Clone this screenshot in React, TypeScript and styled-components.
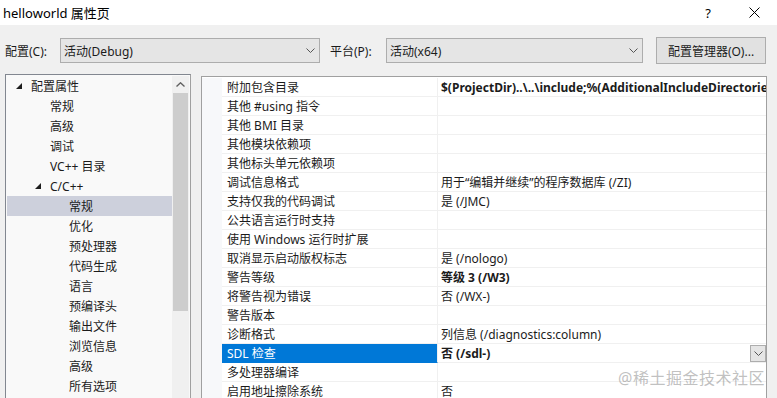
import styled, { createGlobalStyle } from 'styled-components'

const GlobalStyle = createGlobalStyle`
    html, body {
        margin: 0;
        padding: 0;
        background: #f0f0f0;
    }
    body {
        font-family: "Noto Sans", "Noto Sans CJK SC", sans-serif;
        font-size: 12px;
        color: #1b1b1b;
    }
`

const Window = styled.div`
    position: relative;
    width: 777px;
    height: 398px;
    overflow: hidden;
    background: #f0f0f0;
    display: flex;
    flex-direction: column;
`

const TitleBar = styled.div`
    height: 25px;
    flex-shrink: 0;
    background: #ffffff;
    display: flex;
    align-items: center;
    padding-left: 3px;
    font-size: 13px;
    color: #000;
`

const TitleText = styled.span`
    flex: 1;
`

const TitleButton = styled.span`
    width: 46px;
    display: flex;
    justify-content: center;
    align-items: center;
    font-size: 13px;
`

const Toolbar = styled.div`
    display: flex;
    align-items: center;
    padding: 12px 0 0 5px;
    height: 27px;
    flex-shrink: 0;
`

const Label = styled.span<{ $width: number; $gap?: number }>`
    width: ${p => p.$width}px;
    margin-left: ${p => p.$gap ?? 0}px;
    flex-shrink: 0;
`

const Combo = styled.div<{ $width: number }>`
    width: ${p => p.$width}px;
    height: 25px;
    box-sizing: border-box;
    border: 1px solid #adadad;
    background: #e5e5e5;
    display: flex;
    align-items: center;
    justify-content: space-between;
    padding: 0 4px 0 3px;
    flex-shrink: 0;
`

const Button = styled.div`
    margin-left: 13px;
    width: 110px;
    height: 27px;
    box-sizing: border-box;
    border: 1px solid #adadad;
    background: #e1e1e1;
    display: flex;
    align-items: center;
    justify-content: center;
`

const Main = styled.div`
    display: flex;
    align-items: flex-start;
    padding: 10px 0 0 5px;
    gap: 10px;
    flex: 1;
    min-height: 0;
`

const TreePanel = styled.div`
    width: 186px;
    height: 340px;
    box-sizing: border-box;
    border: 1px solid #828790;
    border-right-color: #a0a0a0;
    background: #f9f9f9;
    display: flex;
    padding: 1px;
`

const TreeList = styled.div`
    flex: 1;
    display: flex;
    flex-direction: column;
`

const TreeItem = styled.div<{ $level: number; $selected?: boolean }>`
    height: 20px;
    flex-shrink: 0;
    display: flex;
    align-items: center;
    padding-left: ${p => 6 + p.$level * 19}px;
    background: ${p => (p.$selected ? '#cdd0dc' : 'transparent')};
    white-space: nowrap;
`

const Expander = styled.span`
    width: 18px;
    flex-shrink: 0;
    box-sizing: border-box;
    padding-left: 3px;
    display: flex;
    align-items: center;
`

const Spacer = styled.span`
    width: 18px;
    flex-shrink: 0;
`

const ScrollBar = styled.div`
    width: 17px;
    background: #f0f0f0;
    display: flex;
    flex-direction: column;
    align-items: center;
`

const ScrollArrow = styled.div`
    height: 17px;
    display: flex;
    align-items: center;
    justify-content: center;
`

const ScrollThumb = styled.div`
    width: 15px;
    height: 218px;
    background: #cdcdcd;
`

const GridPanel = styled.div`
    margin-top: 2px;
    width: 566px;
    height: 340px;
    box-sizing: border-box;
    border: 1px solid #a0a0a0;
    border-bottom: none;
    background: #ffffff;
    display: flex;
    flex-direction: column;
    padding-top: 1px;
    overflow: hidden;
`

const Row = styled.div`
    display: grid;
    grid-template-columns: 20px 216px 1fr;
    height: 19px;
    flex-shrink: 0;
`

const Gutter = styled.div`
    background: #f7f8fa;
`

const NameCell = styled.div<{ $selected?: boolean }>`
    display: flex;
    align-items: center;
    padding-left: 5px;
    box-sizing: border-box;
    border-bottom: 1px solid ${p => (p.$selected ? '#0078d7' : '#f0f0f0')};
    border-right: 1px solid #f0f0f0;
    background: ${p => (p.$selected ? '#0078d7' : '#ffffff')};
    color: ${p => (p.$selected ? '#ffffff' : '#1b1b1b')};
    white-space: nowrap;
    overflow: hidden;
`

const ValueCell = styled.div<{ $bold?: boolean }>`
    display: flex;
    align-items: center;
    justify-content: space-between;
    padding-left: 3px;
    box-sizing: border-box;
    border-bottom: 1px solid #f0f0f0;
    font-weight: ${p => (p.$bold ? 700 : 400)};
    white-space: nowrap;
    overflow: hidden;
`

const DropButton = styled.span`
    width: 16px;
    height: 17px;
    box-sizing: border-box;
    border: 1px solid #adadad;
    background: #e5e5e5;
    display: flex;
    align-items: center;
    justify-content: center;
    flex-shrink: 0;
`

const Watermark = styled.div`
    position: absolute;
    right: 12px;
    top: 365px;
    font-size: 16px;
    color: rgba(140, 140, 140, 0.55);
    letter-spacing: 0.5px;
    pointer-events: none;
`

const Chevron = () => (
    <svg width="9" height="5" viewBox="0 0 9 5">
        <path d="M0.5 0.5 L4.5 4.5 L8.5 0.5" fill="none" stroke="#555" strokeWidth="1" />
    </svg>
)

const Triangle = () => (
    <svg width="7" height="7" viewBox="0 0 7 7">
        <path d="M6 0 L6 6 L0 6 Z" fill="#1e1e1e" />
    </svg>
)

const CloseIcon = () => (
    <svg width="11" height="11" viewBox="0 0 11 11">
        <path d="M0.5 0.5 L10.5 10.5 M10.5 0.5 L0.5 10.5" stroke="#000" strokeWidth="1" />
    </svg>
)

const UpArrow = () => (
    <svg width="9" height="5" viewBox="0 0 9 5">
        <path d="M0.5 4.5 L4.5 0.8 L8.5 4.5" fill="none" stroke="#606060" strokeWidth="1.4" />
    </svg>
)

const treeItems = [
    { text: '配置属性', level: 0, expand: true },
    { text: '常规', level: 1 },
    { text: '高级', level: 1 },
    { text: '调试', level: 1 },
    { text: 'VC++ 目录', level: 1 },
    { text: 'C/C++', level: 1, expand: true },
    { text: '常规', level: 2, selected: true },
    { text: '优化', level: 2 },
    { text: '预处理器', level: 2 },
    { text: '代码生成', level: 2 },
    { text: '语言', level: 2 },
    { text: '预编译头', level: 2 },
    { text: '输出文件', level: 2 },
    { text: '浏览信息', level: 2 },
    { text: '高级', level: 2 },
    { text: '所有选项', level: 2 },
]

const props = [
    { name: '附加包含目录', value: '$(ProjectDir)..\\..\\include;%(AdditionalIncludeDirectories)', bold: true },
    { name: '其他 #using 指令', value: '' },
    { name: '其他 BMI 目录', value: '' },
    { name: '其他模块依赖项', value: '' },
    { name: '其他标头单元依赖项', value: '' },
    { name: '调试信息格式', value: '用于“编辑并继续”的程序数据库 (/ZI)' },
    { name: '支持仅我的代码调试', value: '是 (/JMC)' },
    { name: '公共语言运行时支持', value: '' },
    { name: '使用 Windows 运行时扩展', value: '' },
    { name: '取消显示启动版权标志', value: '是 (/nologo)' },
    { name: '警告等级', value: '等级 3 (/W3)', bold: true },
    { name: '将警告视为错误', value: '否 (/WX-)' },
    { name: '警告版本', value: '' },
    { name: '诊断格式', value: '列信息 (/diagnostics:column)' },
    { name: 'SDL 检查', value: '否 (/sdl-)', bold: true, selected: true },
    { name: '多处理器编译', value: '' },
    { name: '启用地址擦除系统', value: '否' },
]

const App = () => {
    return (
        <Window>
            <GlobalStyle />
            <TitleBar>
                <TitleText>helloworld 属性页</TitleText>
                <TitleButton>?</TitleButton>
                <TitleButton><CloseIcon /></TitleButton>
            </TitleBar>
            <Toolbar>
                <Label $width={55}>配置(C):</Label>
                <Combo $width={260}>
                    活动(Debug)
                    <Chevron />
                </Combo>
                <Label $width={56} $gap={10}>平台(P):</Label>
                <Combo $width={257}>
                    活动(x64)
                    <Chevron />
                </Combo>
                <Button>配置管理器(O)...</Button>
            </Toolbar>
            <Main>
                <TreePanel>
                    <TreeList>
                        {treeItems.map((item, i) => (
                            <TreeItem key={i} $level={item.level} $selected={item.selected}>
                                {item.expand ? (
                                    <Expander><Triangle /></Expander>
                                ) : (
                                    <Spacer />
                                )}
                                {item.text}
                            </TreeItem>
                        ))}
                    </TreeList>
                    <ScrollBar>
                        <ScrollArrow><UpArrow /></ScrollArrow>
                        <ScrollThumb />
                    </ScrollBar>
                </TreePanel>
                <GridPanel>
                    {props.map((p, i) => (
                        <Row key={i}>
                            <Gutter />
                            <NameCell $selected={p.selected}>{p.name}</NameCell>
                            <ValueCell $bold={p.bold}>
                                <span>{p.value}</span>
                                {p.selected && (
                                    <DropButton><Chevron /></DropButton>
                                )}
                            </ValueCell>
                        </Row>
                    ))}
                </GridPanel>
            </Main>
            <Watermark>@稀土掘金技术社区</Watermark>
        </Window>
    )
}

export default App
